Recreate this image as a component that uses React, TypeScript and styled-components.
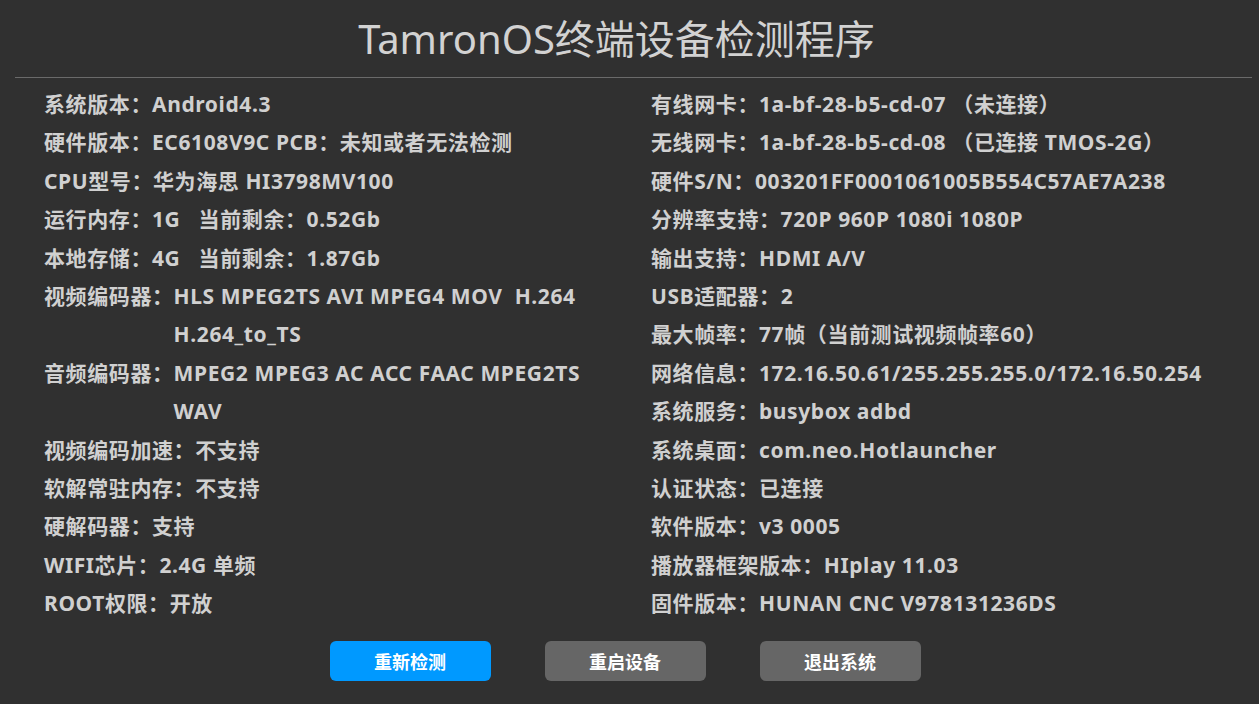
import React from "react";
import styled, { createGlobalStyle } from "styled-components";

interface InfoItem {
  label: string;
  value: string;
}

const leftItems: InfoItem[] = [
  { label: "系统版本：", value: "Android4.3" },
  { label: "硬件版本：", value: "EC6108V9C PCB：未知或者无法检测" },
  { label: "CPU型号：", value: "华为海思 HI3798MV100" },
  { label: "运行内存：", value: "1G\u00a0\u00a0\u00a0当前剩余：0.52Gb" },
  { label: "本地存储：", value: "4G\u00a0\u00a0\u00a0当前剩余：1.87Gb" },
  { label: "视频编码器：", value: "HLS MPEG2TS AVI MPEG4 MOV\u00a0 H.264 H.264_to_TS" },
  { label: "音频编码器：", value: "MPEG2 MPEG3 AC ACC FAAC MPEG2TS WAV" },
  { label: "视频编码加速：", value: "不支持" },
  { label: "软解常驻内存：", value: "不支持" },
  { label: "硬解码器：", value: "支持" },
  { label: "WIFI芯片：", value: "2.4G 单频" },
  { label: "ROOT权限：", value: "开放" },
];

const rightItems: InfoItem[] = [
  { label: "有线网卡：", value: "1a-bf-28-b5-cd-07 （未连接）" },
  { label: "无线网卡：", value: "1a-bf-28-b5-cd-08 （已连接 TMOS-2G）" },
  { label: "硬件S/N：", value: "003201FF0001061005B554C57AE7A238" },
  { label: "分辨率支持：", value: "720P 960P 1080i 1080P" },
  { label: "输出支持：", value: "HDMI A/V" },
  { label: "USB适配器：", value: "2" },
  { label: "最大帧率：", value: "77帧（当前测试视频帧率60）" },
  { label: "网络信息：", value: "172.16.50.61/255.255.255.0/172.16.50.254" },
  { label: "系统服务：", value: "busybox adbd" },
  { label: "系统桌面：", value: "com.neo.Hotlauncher" },
  { label: "认证状态：", value: "已连接" },
  { label: "软件版本：", value: "v3 0005" },
  { label: "播放器框架版本：", value: "HIplay 11.03" },
  { label: "固件版本：", value: "HUNAN CNC V978131236DS" },
];

const GlobalStyle = createGlobalStyle`
  html, body {
    margin: 0;
    padding: 0;
    background: #303030;
  }
  body {
    font-family: "Noto Sans", "Noto Sans CJK SC", sans-serif;
  }
`;

const Screen = styled.div`
  width: 1259px;
  height: 704px;
  display: flex;
  flex-direction: column;
  background: #303030;
  color: #d0d0d0;
  overflow: hidden;
`;

const Header = styled.header`
  margin: 0 7px 0 15px;
  height: 77px;
  border-bottom: 1px solid #6a6a6a;
  display: flex;
  align-items: center;
  justify-content: center;
`;

const Title = styled.h1`
  margin: 0 0 0 -34px;
  font-family: "Noto Sans", "Noto Sans CJK SC", sans-serif;
  font-size: 40px;
  font-weight: 400;
  color: #d2d2d2;
  padding-bottom: 4px;
`;

const Body = styled.main`
  display: grid;
  grid-template-columns: 607px 1fr;
  padding: 7px 0 0 44px;
`;

const Column = styled.section<{ $gutter?: number }>`
  display: flex;
  flex-direction: column;
  padding-right: ${(p) => p.$gutter ?? 0}px;
`;

const Row = styled.div`
  display: flex;
  font-size: 21px;
  font-weight: 700;
  line-height: 38.4px;
  letter-spacing: 0.6px;
`;

const Label = styled.span`
  white-space: nowrap;
`;

const Value = styled.span`
  flex: 1;
`;

const Actions = styled.div`
  display: flex;
  justify-content: center;
  gap: 54px;
  padding: 18px 9px 0 0;
`;

const ActionButton = styled.button<{ $primary?: boolean }>`
  width: 161px;
  height: 40px;
  border: none;
  border-radius: 6px;
  background: ${(p) => (p.$primary ? "#0099ff" : "#666666")};
  color: #ffffff;
  font-family: "Noto Sans CJK SC", sans-serif;
  font-size: 18px;
  font-weight: 700;
  cursor: pointer;
`;

const InfoColumn: React.FC<{ items: InfoItem[]; gutter?: number }> = ({
  items,
  gutter,
}) => (
  <Column $gutter={gutter}>
    {items.map((item) => (
      <Row key={item.label}>
        <Label>{item.label}</Label>
        <Value>{item.value}</Value>
      </Row>
    ))}
  </Column>
);

export default function App() {
  return (
    <>
      <GlobalStyle />
      <Screen>
        <Header>
          <Title>TamronOS终端设备检测程序</Title>
        </Header>
        <Body>
          <InfoColumn items={leftItems} gutter={40} />
          <InfoColumn items={rightItems} />
        </Body>
        <Actions>
          <ActionButton $primary>重新检测</ActionButton>
          <ActionButton>重启设备</ActionButton>
          <ActionButton>退出系统</ActionButton>
        </Actions>
      </Screen>
    </>
  );
}
